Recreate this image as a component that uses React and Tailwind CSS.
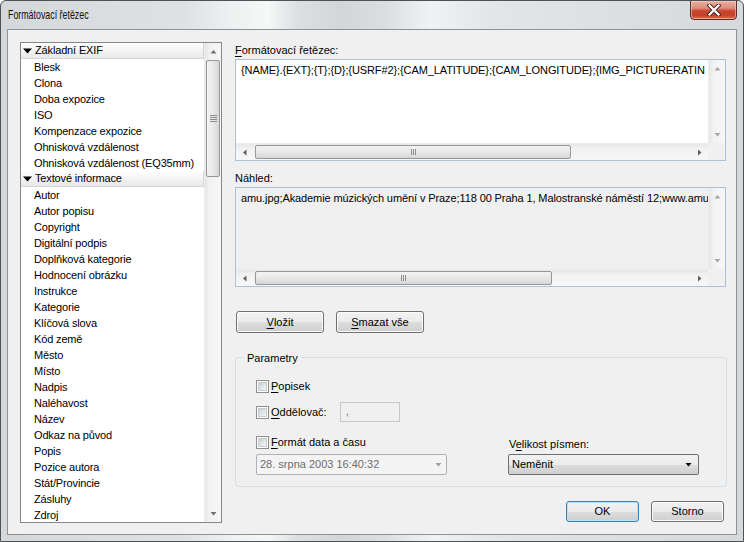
import React from 'react';

const listGroups = [
    {
        title: 'Základní EXIF',
        items: ['Blesk', 'Clona', 'Doba expozice', 'ISO', 'Kompenzace expozice', 'Ohnisková vzdálenost', 'Ohnisková vzdálenost (EQ35mm)'],
    },
    {
        title: 'Textové informace',
        items: [
            'Autor', 'Autor popisu', 'Copyright', 'Digitální podpis', 'Doplňková kategorie', 'Hodnocení obrázku',
            'Instrukce', 'Kategorie', 'Klíčová slova', 'Kód země', 'Město', 'Místo', 'Nadpis', 'Naléhavost',
            'Název', 'Odkaz na původ', 'Popis', 'Pozice autora', 'Stát/Provincie', 'Zásluhy', 'Zdroj',
        ],
    },
];

const Arrow = ({ dir, color = '#606060' }) => {
    const paths = {
        up: 'M0.5 4.5 L3.5 1 L6.5 4.5 Z',
        down: 'M0.5 1 L3.5 4.5 L6.5 1 Z',
        left: 'M4.5 0.5 L1 3.5 L4.5 6.5 Z',
        right: 'M1 0.5 L4.5 3.5 L1 6.5 Z',
    };
    const vertical = dir === 'up' || dir === 'down';
    return (
        <svg width={vertical ? 7 : 5} height={vertical ? 5 : 7} viewBox={vertical ? '0 0 7 5' : '0 0 5 7'}>
            <path d={paths[dir]} fill={color} />
        </svg>
    );
};

const VScroll = ({ thumb, arrowColor }) => (
    <div className="w-[17px] h-full flex flex-col bg-[linear-gradient(90deg,#e6e6e6,#f2f2f2_30%,#f7f7f7)] border-l border-[#ececec]">
        <div className="h-[17px] flex items-center justify-center">
            <Arrow dir="up" color={arrowColor} />
        </div>
        <div className="flex-1 px-[1px]">
            {thumb && (
                <div className="h-[117px] rounded-[2px] border border-[#979797] bg-[linear-gradient(90deg,#f3f3f3,#e8e8e8_50%,#d6d6d6)] flex flex-col items-center justify-center gap-[1px]">
                    <div className="w-[7px] h-[1px] bg-[#8d8d8d]" />
                    <div className="w-[7px] h-[1px] bg-[#8d8d8d]" />
                    <div className="w-[7px] h-[1px] bg-[#8d8d8d]" />
                    <div className="w-[7px] h-[1px] bg-[#8d8d8d]" />
                </div>
            )}
        </div>
        <div className="h-[17px] flex items-center justify-center">
            <Arrow dir="down" color={arrowColor} />
        </div>
    </div>
);

const HScroll = ({ thumbWidth }) => (
    <div className="h-[17px] flex-1 flex bg-[linear-gradient(180deg,#e6e6e6,#f2f2f2_30%,#f7f7f7)] border-t border-[#ececec]">
        <div className="w-[17px] flex items-center justify-center">
            <Arrow dir="left" />
        </div>
        <div className="flex-1 py-[1px] pl-[2px]">
            <div
                className="h-full rounded-[2px] border border-[#979797] bg-[linear-gradient(180deg,#f3f3f3,#e8e8e8_50%,#d6d6d6)] flex items-center justify-center gap-[1px]"
                style={{ width: thumbWidth }}
            >
                <div className="w-[1px] h-[6px] bg-[#8d8d8d]" />
                <div className="w-[1px] h-[6px] bg-[#8d8d8d]" />
                <div className="w-[1px] h-[6px] bg-[#8d8d8d]" />
            </div>
        </div>
        <div className="w-[17px] flex items-center justify-center">
            <Arrow dir="right" />
        </div>
    </div>
);

const TextArea = ({ text, readOnly, thumbWidth, height }) => (
    <div className={`w-[491px] ${height} border border-[#abc1d8] flex flex-col ${readOnly ? 'bg-[#f0f0f0]' : 'bg-white'}`}>
        <div className="flex-1 flex min-h-0">
            <div className="flex-1 overflow-hidden whitespace-nowrap pl-[5px] pt-[3px] leading-[14px] tracking-[-0.1px]">{text}</div>
            <VScroll arrowColor="#a6a6a6" />
        </div>
        <div className="flex">
            <HScroll thumbWidth={thumbWidth} />
            <div className="w-[17px] h-[17px] bg-[#f0f0f0]" />
        </div>
    </div>
);

const Button = ({ children, wide, isDefault }) => (
    <button
        className={`${wide ? 'w-[88px] h-[22px]' : 'w-[73px] h-[21px]'} rounded-[3px] border ${
            isDefault ? 'border-[#3c7fb1] shadow-[inset_0_0_0_1px_#b7e2f8]' : 'border-[#707070] shadow-[inset_0_0_0_1px_#fcfcfc]'
        } bg-[linear-gradient(180deg,#f2f2f2_0%,#ebebeb_50%,#dddddd_51%,#cfcfcf_100%)] text-black text-[11px] leading-none`}
    >
        {children}
    </button>
);

const Checkbox = ({ label, u }) => (
    <div className="flex items-center h-[16px]">
        <div className="w-[13px] h-[13px] border border-[#8e8f8f] bg-white p-[1px]">
            <div className="w-full h-full border border-[#c9ccd1] bg-[linear-gradient(135deg,#cbcfd5,#f6f6f6)]" />
        </div>
        <span className="ml-[2px]">
            <span className="underline underline-offset-[2px]">{u}</span>
            {label}
        </span>
    </div>
);

export default function App() {
    return (
        <div className="w-[744px] h-[542px] flex flex-col rounded-t-[6px] border border-[#4d5257] bg-[linear-gradient(90deg,#d5d8db_0%,#dfe1e3_25%,#eef0f1_31%,#f6f7f7_36%,#dcdee0_40%,#d3d6d9_46%,#dcdfe1_52%,#f1f2f3_58%,#e3e5e7_66%,#d6d9dc_100%)] font-['Liberation_Sans',Arial,sans-serif] text-[11px] text-black overflow-hidden">
            {/* Title bar */}
            <div className="h-[28px] flex justify-between">
                <div className="pl-[7px] pt-[6px] text-[13px] leading-[15px] whitespace-nowrap">
                    <span className="inline-block origin-left scale-x-[0.68] text-[#111]">Formátovací řetězec</span>
                </div>
                <div className="mr-[6px] -mt-[1px] w-[47px] h-[20px] rounded-b-[4px] border border-[#5e2b22] bg-[linear-gradient(180deg,#e9b0a2_0%,#dc8d78_40%,#c9452d_55%,#c5432c_80%,#d9704f_100%)] shadow-[inset_0_0_0_1px_rgba(255,220,210,0.5)] flex items-center justify-center">
                    <svg width="14" height="12" viewBox="0 0 14 12">
                        <path d="M2.5 1.5 L11.5 10.5 M11.5 1.5 L2.5 10.5" stroke="#4a2a26" strokeWidth="4.2" strokeLinecap="square" />
                        <path d="M2.5 1.5 L11.5 10.5 M11.5 1.5 L2.5 10.5" stroke="#ffffff" strokeWidth="2.2" strokeLinecap="square" />
                    </svg>
                </div>
            </div>

            {/* Client area */}
            <div className="flex-1 mx-[6px] mb-[6px] border border-[#8e9297] bg-[#f0f0f0] flex pl-[12px] pt-[12px]">
                {/* Left list */}
                <div className="w-[202px] h-[481px] border border-[#828790] bg-white flex">
                    <div className="w-[183px] overflow-hidden tracking-[-0.15px]">
                        {listGroups.map((group) => (
                            <div key={group.title}>
                                <div className="h-[16px] flex items-center pl-[2px] border-b border-r border-[#d5d5d5] bg-[linear-gradient(180deg,#ffffff,#f4f4f4_50%,#e8e8e8)]">
                                    <svg width="9" height="6" viewBox="0 0 9 6">
                                        <path d="M0 0.5 L9 0.5 L4.5 5.5 Z" fill="#000" />
                                    </svg>
                                    <span className="ml-[3px] leading-[15px]">{group.title}</span>
                                </div>
                                {group.items.map((item) => (
                                    <div key={item} className="h-[16px] leading-[16px] pl-[13px] whitespace-nowrap">
                                        {item}
                                    </div>
                                ))}
                            </div>
                        ))}
                    </div>
                    <VScroll thumb arrowColor="#707070" />
                </div>

                {/* Right column */}
                <div className="ml-[13px] w-[492px] flex flex-col">
                    <div className="h-[16px] leading-[16px]">
                        <span className="underline underline-offset-[2px]">F</span>ormátovací řetězec:
                    </div>
                    <div className="mt-[1px]">
                        <TextArea
                            height="h-[102px]"
                            thumbWidth={316}
                            text="{NAME}.{EXT};{T};{D};{USRF#2};{CAM_LATITUDE};{CAM_LONGITUDE};{IMG_PICTURERATIN"
                        />
                    </div>

                    <div className="mt-[9px] h-[16px] leading-[16px]">Náhled:</div>
                    <div className="mt-[1px]">
                        <TextArea
                            readOnly
                            height="h-[100px]"
                            thumbWidth={297}
                            text="amu.jpg;Akademie múzických umění v Praze;118 00 Praha 1, Malostranské náměstí 12;www.amu"
                        />
                    </div>

                    <div className="mt-[24px] ml-[1px] flex gap-[12px]">
                        <Button wide>
                            <span className="underline underline-offset-[2px]">V</span>ložit
                        </Button>
                        <Button wide>
                            <span className="underline underline-offset-[2px]">S</span>mazat vše
                        </Button>
                    </div>

                    {/* Parametry group */}
                    <div className="relative mt-[24px] h-[130px] rounded-[3px] border border-[#d5dfe5] pl-[20px] pt-[20px]">
                        <span className="absolute -top-[8px] left-[8px] px-[3px] bg-[#f0f0f0] leading-[16px]">Parametry</span>
                        <Checkbox u="P" label="opisek" />
                        <div className="mt-[8px] flex items-center h-[20px]">
                            <Checkbox u="O" label="ddělovač:" />
                            <div className="ml-[13px] w-[60px] h-[20px] border border-[#c5c9ce] bg-[#f0f0f0] pl-[5px] leading-[17px] text-[#6d6d6d]">
                                ,
                            </div>
                        </div>
                        <div className="mt-[12px] flex">
                            <div className="w-[191px]">
                                <Checkbox u="F" label="ormát data a času" />
                                <div className="mt-[4px] w-[191px] h-[21px] rounded-[2px] border border-[#adb2b5] bg-[#f4f4f4] flex items-center justify-between pl-[3px] pr-[4px] text-[#6d6d6d]">
                                    <span>28. srpna 2003 16:40:32</span>
                                    <Arrow dir="down" color="#a0a0a0" />
                                </div>
                            </div>
                            <div className="ml-[61px] w-[191px] flex flex-col justify-end">
                                <div className="h-[16px] leading-[16px] pl-[1px] mb-[2px]">
                                    V<span className="underline underline-offset-[2px]">e</span>likost písmen:
                                </div>
                                <div className="w-[191px] h-[21px] rounded-[2px] border border-[#707070] bg-[linear-gradient(180deg,#f2f2f2_0%,#ebebeb_50%,#dddddd_51%,#cfcfcf_100%)] flex items-center justify-between pl-[3px] pr-[6px]">
                                    <span>Neměnit</span>
                                    <Arrow dir="down" color="#000" />
                                </div>
                            </div>
                        </div>
                    </div>

                    <div className="mt-[14px] mr-[3px] flex justify-end gap-[12px]">
                        <Button isDefault>OK</Button>
                        <Button>Storno</Button>
                    </div>
                </div>
            </div>
        </div>
    );
}
